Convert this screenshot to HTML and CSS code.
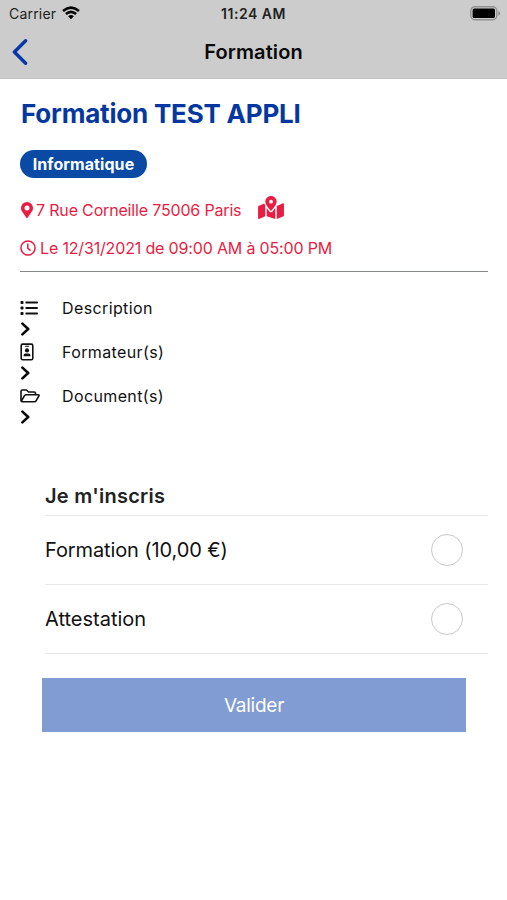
FILE: index.html
```html
<!DOCTYPE html>
<html lang="fr">
<head>
<meta charset="utf-8">
<title>Formation</title>
<link rel="stylesheet" href="styles.css">
</head>
<body>
<header class="top">
  <div class="status">
    <div class="carrier"><span>Carrier</span>
      <svg width="18" height="14" viewBox="0 0 18 14" fill="none" stroke="#050505" stroke-width="2.6"><path d="M1 4.9Q9-1.8 17 4.9M3.9 8.1Q9 3.8 14.1 8.1"/><path d="M6.1 10.2Q9 7.7 11.9 10.2L9 13.3Z" fill="#050505" stroke="none"/></svg>
    </div>
    <span class="time">11:24 AM</span>
    <svg class="battery" width="31" height="15" viewBox="0 0 31 15"><rect x=".8" y=".8" width="26" height="13" rx="4" fill="none" stroke="#929292" stroke-width="1.4"/><rect x="2.6" y="2.6" width="22.4" height="9.4" rx="1.5" fill="#000"/><path d="M28.3 5q2 1 2 2.4t-2 2.4z" fill="#929292"/></svg>
  </div>
  <div class="nav">
    <svg class="back" width="16" height="26" viewBox="0 0 16 26" fill="none" stroke="#0838a5" stroke-width="3.4" stroke-linecap="round" stroke-linejoin="round"><path d="M13.6 1.8 2.4 13l11.2 11.2"/></svg>
    <span class="nav-title">Formation</span>
  </div>
</header>
<main>
  <section class="intro">
    <h1><span>Formation TEST APPLI</span></h1>
    <div class="badge"><span>Informatique</span></div>
    <div class="meta place">
      <svg width="12" height="16" viewBox="0 0 384 512" fill="currentColor"><path d="M172 502C27 291 0 269 0 192a192 192 0 0 1 384 0c0 77-27 99-172 310-10 13-30 13-40 0zM192 272a80 80 0 1 0 0-160 80 80 0 0 0 0 160z"/></svg>
      <span class="address">7 Rue Corneille 75006 Paris</span>
      <svg class="map" width="26" height="23" viewBox="0 0 576 512" fill="currentColor"><path d="M288 0c-70 0-126 56-126 126 0 56 82 158 114 196 6 8 18 8 24 0 32-38 114-140 114-196C414 56 358 0 288 0zm0 168a42 42 0 1 1 0-84 42 42 0 0 1 0 84zM20 216A32 32 0 0 0 0 246v250c0 11 11 19 22 15l138-63V215c-9-16-16-32-22-47zM288 360c-14 0-27-6-36-17-20-23-40-49-60-77v182l192 64V266c-19 28-40 54-60 77-9 11-22 17-36 17zM554 161 416 224v288l140-56a32 32 0 0 0 20-30V176c0-11-11-19-22-15z"/></svg>
    </div>
    <div class="meta date">
      <svg width="16" height="16" viewBox="0 0 16 16" fill="none" stroke="currentColor" stroke-width="1.5" stroke-linecap="round"><circle cx="8" cy="8" r="7.1"/><path d="M7.8 4v4.3l2.3 1.8"/></svg>
      <span class="when">Le 12/31/2021 de 09:00 AM à 05:00 PM</span>
    </div>
  </section>
  <ul class="links">
    <li>
      <svg class="icon" width="20" height="16" viewBox="0 0 20 16" fill="#111"><rect x=".5" y="1" width="3" height="3" rx=".8"/><rect x=".5" y="6.5" width="3" height="3" rx=".8"/><rect x=".5" y="12" width="3" height="3" rx=".8"/><rect x="5.3" y="1.6" width="12.7" height="1.9" rx=".9"/><rect x="5.3" y="7.1" width="12.7" height="1.9" rx=".9"/><rect x="5.3" y="12.6" width="12.7" height="1.9" rx=".9"/></svg>
      <span class="label l1">Description</span>
      <svg class="chevron" width="12" height="14" viewBox="0 0 12 14"><path d="m2.4 1.6 5.8 5.4-5.8 5.4"/></svg>
    </li>
    <li>
      <svg class="icon" width="20" height="18" viewBox="0 0 20 18" fill="#111"><rect x="1.2" y="1.1" width="11.6" height="15.6" rx="1.5" fill="none" stroke="#111" stroke-width="1.6"/><rect x="4.8" y="2.8" width="4.4" height="1" rx=".5"/><circle cx="7" cy="7.4" r="2.1"/><path d="M3.5 13.2v-.8q0-2 2-2h3q2 0 2 2v.8z"/></svg>
      <span class="label l2">Formateur(s)</span>
      <svg class="chevron" width="12" height="14" viewBox="0 0 12 14"><path d="m2.4 1.6 5.8 5.4-5.8 5.4"/></svg>
    </li>
    <li>
      <svg class="icon" width="20" height="16" viewBox="0 0 20 16" fill="none" stroke="#111" stroke-width="1.6" stroke-linejoin="round"><path d="M2.3 13.8Q1 13.8 1 12.5V3.3Q1 2 2.3 2h4.2l2 2h5.7q1.3 0 1.3 1.3v1.4M1.3 13.3l3-5.4q.6-1.1 1.7-1.1h12.2q1.3 0 .7 1.1l-2.7 4.8q-.6 1.1-1.8 1.1H2.3"/></svg>
      <span class="label l3">Document(s)</span>
      <svg class="chevron" width="12" height="14" viewBox="0 0 12 14"><path d="m2.4 1.6 5.8 5.4-5.8 5.4"/></svg>
    </li>
  </ul>
  <form class="signup">
    <h2><span>Je m'inscris</span></h2>
    <label class="option"><span class="o1">Formation (10,00 €)</span><input type="radio" name="choice"></label>
    <label class="option"><span class="o2">Attestation</span><input type="radio" name="choice"></label>
    <button type="button"><span>Valider</span></button>
  </form>
</main>
</body>
</html>
```
FILE: styles.css
```css
* { box-sizing: border-box; }
body { margin: 0; height: 900px; background: #fff; color: #111; font-family: Inter, "Liberation Sans", sans-serif; }
svg { display: block; flex: none; }
span { white-space: nowrap; }

.top { height: 79px; background: #ccc; border-bottom: 1px solid #c2c2c2; }
.status { height: 27px; display: grid; grid-template-columns: 1fr auto 1fr; align-items: center; padding: 0 6px 0 9px; font-size: 14px; color: #222; }
.carrier { display: flex; align-items: center; gap: 6px; }
.carrier span { letter-spacing: .2px; }
.carrier svg { margin-top: -1px; }
.time { font-size: 14px; font-weight: 600; letter-spacing: .5px; margin-right: 3px; }
.battery { justify-self: end; }
.nav { height: 50px; display: grid; grid-template-columns: 1fr auto 1fr; align-items: center; padding: 0 12px; }
.nav-title { font-size: 20px; font-weight: 600; color: #090909; letter-spacing: .1px; }

.intro { margin: 0 19px 0 20px; height: 193px; border-bottom: 1px solid #858988; }
h1 { margin: 0; padding: 17px 0 0 1px; font-size: 26px; line-height: 36px; font-weight: 700; letter-spacing: -.2px; color: #0438a0; }
.badge { display: flex; align-items: center; justify-content: center; width: 127px; height: 28px; margin-top: 18px; border-radius: 14px; background: #0a4aa5; color: #fff; font-size: 16px; font-weight: 700; letter-spacing: .08px; }
.meta { display: flex; align-items: center; color: #e91d43; font-size: 16px; height: 26px; }
.place { margin-top: 19px; padding-left: 1px; gap: 3px; }
.address { letter-spacing: -.17px; }
.map { margin: -5px 0 0 14px; }
.date { margin-top: 12px; gap: 4px; }
.when { letter-spacing: -.16px; }

.links { list-style: none; margin: 25px 20px 0; padding: 0; }
.links li { height: 44px; display: grid; grid-template-columns: 42px 1fr; grid-template-rows: 21px 23px; align-items: center; font-size: 16px; }
.label { letter-spacing: .38px; }
.chevron { fill: none; stroke: #080808; stroke-width: 2.6; stroke-linecap: round; stroke-linejoin: round; margin-top: -2px; }

.signup { margin: 0 19px 0 42px; padding-top: 47px; }
h2 { margin: 0 0 0 3px; height: 40px; border-bottom: 1px solid #e6e6e6; font-size: 20px; line-height: 40px; font-weight: 600; letter-spacing: .25px; color: #222; }
.option { display: flex; align-items: center; justify-content: space-between; height: 69px; margin-left: 3px; padding-right: 25px; border-bottom: 1px solid #e9e9e9; font-size: 20px; }
.o1 { letter-spacing: -.11px; }
input { appearance: none; width: 32px; height: 32px; margin: 0; border: 1.5px solid #c9c9c9; border-radius: 50%; }
button { display: flex; align-items: center; justify-content: center; width: 424px; height: 54px; margin-top: 24px; padding: 0; border: 0; background: #819bd3; color: #fff; font-family: inherit; font-size: 19px; letter-spacing: -.25px; }
```
